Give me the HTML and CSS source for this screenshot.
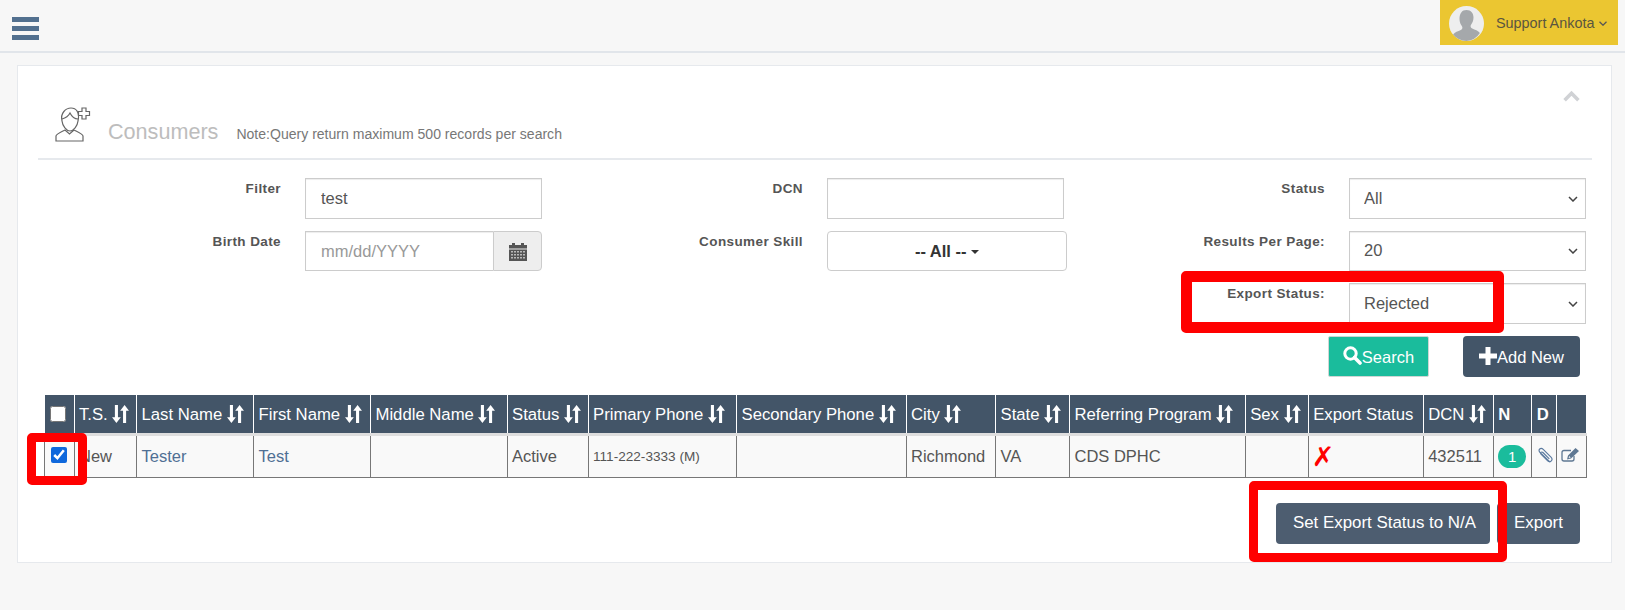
FILE: index.html
```html
<!DOCTYPE html>
<html lang="en">
<head>
<meta charset="utf-8">
<title>Consumers</title>
<link rel="stylesheet" href="styles.css">
</head>
<body>
<svg class="defs" aria-hidden="true">
  <symbol id="i-sort" viewBox="0 0 16 17">
    <path d="M2.7 0h2.9v11.5H8.3L4.15 17 0 11.5h2.7z"/>
    <path d="M11.85 0 16 5.5h-2.7V17h-2.9V5.5H7.7z"/>
  </symbol>
</svg>
<header class="topbar">
  <button class="burger" aria-label="Menu"><span></span><span></span><span></span></button>
  <div class="user">
    <svg class="avatar" viewBox="0 0 35 35">
      <circle cx="17.5" cy="17.5" r="17.5" fill="#eeeeee"/>
      <path fill="#a5a8ab" d="M17.5 4c4.6 0 7 3.400 7 7.500 0 3-1 5.200-2.300 7-1 1.300-.8 3.200 1 4 2.800 1.200 6 2.200 7.700 4.500A17.500 17.500 0 0 1 17.500 35 17.500 17.500 0 0 1 4.100 28.500c1.700-2.300 4.900-3.300 7.700-4.500 1.800-.8 2-2.700 1-4-1.300-1.800-2.300-4-2.300-7C10.500 7.400 12.900 4 17.500 4z"/>
    </svg>
    <span class="user-name">Support Ankota</span>
    <svg class="user-caret" viewBox="0 0 8 5"><path d="M.5.8 4 4.200 7.500.8" fill="none" stroke="#555" stroke-width="1.300"/></svg>
  </div>
</header>

<main class="card">
  <div class="card-head">
    <svg class="head-icon" viewBox="5 7 37 37" fill="none" stroke="#666" stroke-width="1.200">
      <path d="M13 22C11 14 17 9 22 9c5 0 9 4 7 13-.5 5-4.500 10-8 10s-7.500-5-8-10z"/>
      <path d="M13 20c4-1 7-4 8-6 2 4 5 6 8 6"/>
      <path d="M7 42v-5c0-2 5-4 9-6l4.500 4 4.500-4c4 2 9 4 9 6v5z"/>
      <path d="M33 9h4v3.500h3.500v4H37V20h-4v-3.500h-3.500v-4H33z" fill="#fff"/>
    </svg>
    <h1 class="title">Consumers</h1>
    <span class="note">Note:Query return maximum 500 records per search</span>
    <svg class="collapse" viewBox="0 0 16 11"><path d="M1.500 9.500 8 3l6.500 6.500" fill="none" stroke="#d0d2d5" stroke-width="3.400"/></svg>
  </div>

  <form class="filters">
    <label class="lbl">Filter</label>
    <input class="ctl" type="text" value="test">
    <label class="lbl">DCN</label>
    <input class="ctl" type="text">
    <label class="lbl">Status</label>
    <select class="ctl"><option>All</option></select>

    <label class="lbl">Birth Date</label>
    <div class="date">
      <input class="ctl date-input" type="text" placeholder="mm/dd/YYYY">
      <span class="addon">
        <svg class="cal" viewBox="0 0 18 19">
          <path fill="#555" d="M0 3h3V1h3v2h6V1h3v2h3v3.500H0z"/>
          <path fill="#555" d="M0 7.500h18V19H0z"/>
          <path fill="#b9b9b9" d="M2 9h2v1.500H2zM5 9h2v1.500H5zM8 9h2v1.500H8zM11 9h2v1.500h-2zM14 9h2v1.500h-2zM2 12h2v1.500H2zM5 12h2v1.500H5zM8 12h2v1.500H8zM11 12h2v1.500h-2zM14 12h2v1.500h-2zM2 15h2v1.500H2zM5 15h2v1.500H5zM8 15h2v1.500H8zM11 15h2v1.500h-2zM14 15h2v1.500h-2z"/>
        </svg>
      </span>
    </div>
    <label class="lbl">Consumer Skill</label>
    <button class="ctl skill" type="button">-- All -- <span class="skill-caret"></span></button>
    <label class="lbl">Results Per Page:</label>
    <select class="ctl"><option>20</option></select>

    <span class="lbl skip-a">Export Status:</span>
    <select class="ctl"><option>Rejected</option></select>
  </form>

  <div class="actions">
    <button class="btn btn-green" type="button">
      <svg class="btn-ico" viewBox="0 0 19 19"><circle cx="7.500" cy="7.500" r="5.700" fill="none" stroke="#fff" stroke-width="3"/><path d="M11.500 11.500 17 17" stroke="#fff" stroke-width="3.600" stroke-linecap="round"/></svg>Search
    </button>
    <button class="btn btn-navy" type="button">
      <svg class="btn-ico" viewBox="0 0 18 18"><path fill="#fff" d="M6.500 0h5v6.500H18v5h-6.500V18h-5v-6.500H0v-5h6.500z"/></svg>Add New
    </button>
  </div>

  <table class="grid">
    <colgroup>
      <col class="w1"><col class="w2"><col class="w3"><col class="w3"><col class="w4"><col class="w5"><col class="w6"><col class="w7"><col class="w8"><col class="w9"><col class="w10"><col class="w11"><col class="w12"><col class="w13"><col class="w14"><col class="w15"><col class="w16">
    </colgroup>
    <thead>
      <tr>
        <th class="check"><input type="checkbox"></th>
        <th>T.S. <svg class="sort"><use href="#i-sort"/></svg></th>
        <th>Last Name <svg class="sort"><use href="#i-sort"/></svg></th>
        <th>First Name <svg class="sort"><use href="#i-sort"/></svg></th>
        <th>Middle Name <svg class="sort"><use href="#i-sort"/></svg></th>
        <th>Status <svg class="sort"><use href="#i-sort"/></svg></th>
        <th>Primary Phone <svg class="sort"><use href="#i-sort"/></svg></th>
        <th>Secondary Phone <svg class="sort"><use href="#i-sort"/></svg></th>
        <th>City <svg class="sort"><use href="#i-sort"/></svg></th>
        <th>State <svg class="sort"><use href="#i-sort"/></svg></th>
        <th>Referring Program <svg class="sort"><use href="#i-sort"/></svg></th>
        <th>Sex <svg class="sort"><use href="#i-sort"/></svg></th>
        <th>Export Status</th>
        <th>DCN <svg class="sort"><use href="#i-sort"/></svg></th>
        <th class="strong">N</th>
        <th class="strong">D</th>
        <th></th>
      </tr>
    </thead>
    <tbody>
      <tr>
        <td class="check"><input type="checkbox" checked></td>
        <td>New</td>
        <td><a class="link" href="#">Tester</a></td>
        <td><a class="link" href="#">Test</a></td>
        <td></td>
        <td>Active</td>
        <td class="phone">111-222-3333 (M)</td>
        <td></td>
        <td>Richmond</td>
        <td>VA</td>
        <td>CDS DPHC</td>
        <td></td>
        <td class="reject">✗</td>
        <td>432511</td>
        <td><span class="badge">1</span></td>
        <td class="ico-cell">
          <svg class="clip" viewBox="0 0 16 16" fill="none" stroke="#5b7a9f" stroke-width="1.100"><path d="M13.500 14.500 3.800 5.200C2.500 3.900 2.700 2.600 3.500 1.900c.9-.8 2.200-.7 3.300.4l7.300 7.300c1.100 1.100 1.200 2.500.3 3.500s-2.300.8-3.400-.2L4.900 6.900c-.7-.7-.7-1.400-.2-1.900s1.200-.4 1.800.2l6 6"/></svg>
        </td>
        <td class="ico-cell">
          <svg class="edit" viewBox="0 0 18 14" fill="none" stroke="#5f7893" stroke-width="1.300"><path d="M10 2.500H3C1.800 2.500 1 3.300 1 4.500v6.500c0 1.200.8 2 2 2h8c1.200 0 2-.8 2-2V8"/><path fill="#5f7893" stroke="none" d="M14.500 0 18 3l-8 7.500-4 1 1-4zM8.200 8l-.5 2 2-.5z"/></svg>
        </td>
      </tr>
    </tbody>
  </table>

  <div class="foot">
    <button class="btn btn-slate btn-set" type="button">Set Export Status to N/A</button>
    <button class="btn btn-slate btn-export" type="button">Export</button>
  </div>
</main>

<div class="mark mark-status"></div>
<div class="mark mark-check"></div>
<div class="mark mark-set"></div>
</body>
</html>
```

FILE: styles.css
```css
* { box-sizing: border-box; }
html, body { margin: 0; }
body {
  position: relative;
  height: 610px;
  overflow: hidden;
  background: #f7f7f7;
  color: #555;
  font-family: "Liberation Sans", Arial, sans-serif;
  font-size: 16.5px;
}
.defs { position: absolute; width: 0; height: 0; }

/* top bar */
.topbar {
  display: flex;
  justify-content: space-between;
  align-items: flex-start;
  height: 53px;
  border-bottom: 2px solid #e1e5ea;
}
.burger {
  display: flex;
  flex-direction: column;
  gap: 4px;
  width: 27px;
  margin: 17px 0 0 12px;
  padding: 0;
  border: 0;
  background: none;
}
.burger span { display: block; height: 5px; width: 100%; background: #52708f; }
.user {
  display: flex;
  align-items: center;
  width: 178px;
  height: 45px;
  margin-right: 7px;
  padding-left: 9px;
  background: #ebc631;
  color: #5a5540;
}
.avatar { width: 35px; height: 35px; margin-top: 1px; }
.user-name { margin-left: 12px; font-size: 14.4px; }
.user-caret { width: 8px; height: 5px; margin-left: 5px; margin-top: 2px; }

/* card */
.card {
  height: 498px;
  margin: 12px 13px 0 17px;
  padding: 0 19px 0 20px;
  background: #fff;
  border: 1px solid #e6e9ed;
}
.card-head {
  display: flex;
  align-items: flex-end;
  height: 94px;
  padding: 0 0 14px 16px;
  border-bottom: 2px solid #e6e9ed;
}
.head-icon { width: 37px; height: 37px; margin-bottom: 1px; }
.title {
  margin: 0 0 0 17px;
  color: #bdbdbd;
  font-size: 21.600px;
  font-weight: 400;
  line-height: 24px;
}
.note {
  margin: 0 0 0 18px;
  color: #777;
  font-size: 14.050px;
  line-height: 20px;
}
.collapse {
  width: 17px;
  height: 12px;
  margin-left: auto;
  margin-right: 12px;
  align-self: flex-start;
  margin-top: 24px;
}

/* filters */
.filters {
  display: grid;
  grid-template-columns: 243px 237px 237px 237px 237px 237px;
  grid-template-rows: 41px 40px 41px;
  column-gap: 24px;
  row-gap: 12px;
  margin-top: 18px;
}
.lbl {
  padding-top: 1px;
  color: #555;
  font-size: 13.500px;
  font-weight: 700;
  letter-spacing: .4px;
  line-height: 20px;
  text-align: right;
}
.skip-a { grid-column: 5; }
.ctl {
  width: 100%;
  height: 100%;
  padding: 0 15px;
  border: 1px solid #ccc;
  border-radius: 0;
  background-color: #fff;
  box-shadow: inset 0 1px 1px rgba(0, 0, 0, .075);
  color: #555;
  font-family: inherit;
  font-size: 16.500px;
}
.ctl::placeholder { color: #999; opacity: 1; }
select.ctl {
  padding: 0 0 2px 14px;
  appearance: none;
  background-image: url("data:image/svg+xml,%3Csvg xmlns='http://www.w3.org/2000/svg' width='10' height='6'%3E%3Cpath d='M1 1l4 4 4-4' fill='none' stroke='%23444' stroke-width='1.500'/%3E%3C/svg%3E");
  background-repeat: no-repeat;
  background-position: right 7px center;
}
.date { display: flex; height: 100%; }
.date-input { flex: 1; min-width: 0; border-right: 0; }
.addon {
  display: flex;
  align-items: center;
  justify-content: center;
  width: 49px;
  background: #eee;
  border: 1px solid #ccc;
  border-radius: 0 4px 4px 0;
}
.cal { width: 18px; height: 19px; }
.skill {
  width: 240px;
  border-radius: 4px;
  box-shadow: none;
  color: #333;
  font-weight: 700;
  text-align: center;
}
.skill-caret {
  display: inline-block;
  vertical-align: middle;
  border-top: 4px solid #333;
  border-left: 4px solid transparent;
  border-right: 4px solid transparent;
}

/* action buttons */
.btn {
  height: 41px;
  padding: 0 15px;
  border: 1px solid transparent;
  border-radius: 4px;
  color: #fff;
  font-family: inherit;
  font-size: 16.500px;
}
.btn-ico { vertical-align: -2px; }
.actions {
  display: flex;
  justify-content: flex-end;
  gap: 34px;
  margin-top: 12px;
  padding-right: 12px;
}
.btn-green { width: 101px; padding: 0; background: #1abc9c; border-color: #cfd6d4; border-radius: 2px; }
.btn-green .btn-ico { width: 19px; height: 19px; }
.btn-navy { width: 117px; padding: 0; background: #435568; }
.btn-navy .btn-ico { width: 18px; height: 18px; }

/* table */
.grid {
  width: 1542px;
  margin: 18px 0 0 6px;
  border-collapse: collapse;
  table-layout: fixed;
  font-size: 16.700px;
}
.w1 { width: 29.500px; }
.w2 { width: 62.500px; }
.w3 { width: 117px; }
.w4 { width: 136.500px; }
.w5 { width: 81px; }
.w6 { width: 148.500px; }
.w7 { width: 169.500px; }
.w8 { width: 89.500px; }
.w9 { width: 74px; }
.w10 { width: 175.700px; }
.w11 { width: 63px; }
.w12 { width: 115px; }
.w13 { width: 70px; }
.w14 { width: 38.500px; }
.w15 { width: 24.500px; }
.w16 { width: 30px; }
.grid th {
  height: 39px;
  padding: 3px 4.500px 0;
  background: #435568;
  border-left: 1px solid #fff;
  border-bottom: 3px solid #dedede;
  color: #fff;
  font-weight: 400;
  text-align: left;
  white-space: nowrap;
}
.grid th:first-child { border-left: 0; }
.grid th.strong { font-weight: 700; }
.grid td {
  height: 43px;
  padding: 0 4.500px;
  background: #f9f9f9;
  border: 1px solid #777;
  border-top: 0;
  color: #555;
  font-size: 16.500px;
  white-space: nowrap;
}
.grid .check { padding: 0 0 0 5.500px; }
.grid .check input {
  display: block;
  width: 16px;
  height: 16px;
  margin: 0;
  accent-color: #0f68dc;
}
.grid td.check input { margin-top: -3px; }
.sort { width: 17px; height: 18px; fill: #fff; vertical-align: -3px; }
.link { color: #4f6f94; text-decoration: none; }
.grid .phone { font-size: 13.600px; }
.grid .reject {
  padding-left: 3px;
  color: #f00;
  font-family: "DejaVu Sans", sans-serif;
  font-size: 27px;
  font-weight: 700;
  line-height: 1;
}
.badge {
  display: block;
  width: 28px;
  height: 23px;
  border-radius: 12px;
  background: #1abc9c;
  color: #fff;
  font-size: 15px;
  line-height: 23px;
  text-align: center;
}
.grid .ico-cell { padding: 0 0 0 4px; }
.clip { display: block; width: 17px; height: 17px; margin-top: -2px; }
.edit { display: block; width: 18px; height: 14px; margin-top: -3px; }

/* footer */
.foot {
  display: flex;
  justify-content: flex-end;
  gap: 7px;
  margin-top: 25px;
  padding-right: 12px;
}
.btn-slate { background: #4d5d70; font-size: 16.900px; }
.btn-set { padding: 0 13px 0 16px; }
.btn-export { width: 83px; padding: 0; }

/* red annotations drawn over the screenshot */
.mark { position: absolute; border-style: solid; border-color: #f00; border-radius: 5px; }
.mark-status { left: 1181px; top: 271px; width: 323px; height: 62px; border-width: 11px; }
.mark-check { left: 27px; top: 433px; width: 60px; height: 52px; border-width: 9px; }
.mark-set { left: 1249px; top: 481px; width: 258px; height: 81px; border-width: 9px; }
```
